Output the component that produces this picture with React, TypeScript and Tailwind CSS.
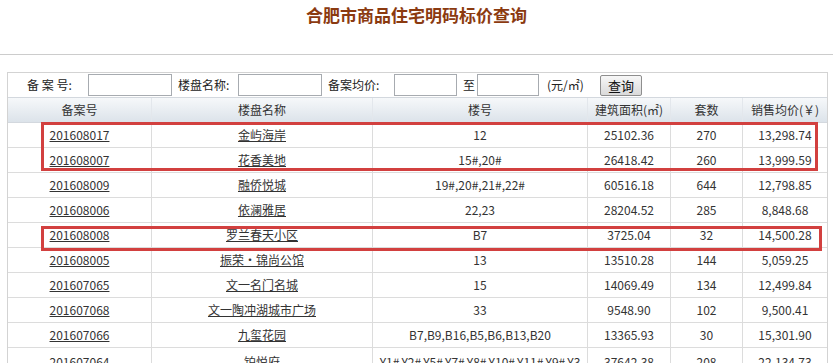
type Row = {
  no: string
  name: string
  building: string
  area: string
  units: string
  price: string
}

const rows: Row[] = [
  { no: '201608017', name: '金屿海岸', building: '12', area: '25102.36', units: '270', price: '13,298.74' },
  { no: '201608007', name: '花香美地', building: '15#,20#', area: '26418.42', units: '260', price: '13,999.59' },
  { no: '201608009', name: '融侨悦城', building: '19#,20#,21#,22#', area: '60516.18', units: '644', price: '12,798.85' },
  { no: '201608006', name: '依澜雅居', building: '22,23', area: '28204.52', units: '285', price: '8,848.68' },
  { no: '201608008', name: '罗兰春天小区', building: 'B7', area: '3725.04', units: '32', price: '14,500.28' },
  { no: '201608005', name: '振荣·锦尚公馆', building: '13', area: '13510.28', units: '144', price: '5,059.25' },
  { no: '201607065', name: '文一名门名城', building: '15', area: '14069.49', units: '134', price: '12,499.84' },
  { no: '201607068', name: '文一陶冲湖城市广场', building: '33', area: '9548.90', units: '102', price: '9,500.41' },
  { no: '201607066', name: '九玺花园', building: 'B7,B9,B16,B5,B6,B13,B20', area: '13365.93', units: '30', price: '15,301.90' },
  {
    no: '201607064',
    name: '铂悦府',
    building: 'Y1#,Y2#,Y5#,Y7#,Y8#,Y10#,Y11#,Y9#,Y3#,Y4#',
    area: '37642.38',
    units: '208',
    price: '22,134.73',
  },
]

const cols = ['w-[144px]', 'w-[221px]', 'w-[215px]', 'w-[83px]', 'w-[72px]', 'w-[84px]']
const headers = ['备案号', '楼盘名称', '楼号', '建筑面积(㎡)', '套数', '销售均价(￥)']

function FilterBar() {
  const input = 'h-[22px] border border-[#a7abb0] bg-white'
  return (
    <div className="flex h-[24px] items-center pl-[19px] text-[12px] text-[#222]">
      <span className="w-[61px] whitespace-pre">备 案 号:</span>
      <input className={`${input} w-[84px]`} />
      <span className="ml-[6px] w-[60px]">楼盘名称:</span>
      <input className={`${input} w-[84px]`} />
      <span className="ml-[6px] w-[66px]">备案均价:</span>
      <input className={`${input} w-[63px]`} />
      <span className="ml-[6px] w-[14px]">至</span>
      <input className={`${input} w-[62px]`} />
      <span className="ml-[8px] w-[53px]">(元/㎡)</span>
      <button className="h-[21px] w-[42px] rounded-[2px] border border-[#8e8e8e] bg-gradient-to-b from-[#f7f7f7] to-[#dadada] text-[13px] leading-none text-[#111]">
        查询
      </button>
    </div>
  )
}

function HouseTable() {
  return (
    <div className="text-[12px] text-[#333]">
      <div className="flex h-[26px] border-y border-[#d3d8de] bg-gradient-to-b from-[#f6f8fa] to-[#dce3ea]">
        {headers.map((h, i) => (
          <div
            key={h}
            className={`${cols[i]} flex items-center justify-center ${i < 5 ? 'border-r border-[#e3e7ec]' : ''}`}
          >
            {h}
          </div>
        ))}
      </div>

      {rows.map((r) => {
        const cells = [r.no, r.name, r.building, r.area, r.units, r.price]
        const tall = r.building.length > 30
        return (
          <div key={r.no} className="flex min-h-[25px] border-b border-[#dcdcdc]">
            {cells.map((c, i) => (
              <div
                key={i}
                className={`${cols[i]} flex justify-center px-[6px] text-center leading-[16px] ${
                  i < 5 ? 'border-r border-[#dcdcdc]' : ''
                } ${tall ? 'items-start break-all pb-[6px] pt-[6px]' : 'items-center'}`}
              >
                {i < 2 ? <a className="cursor-pointer text-[#333] underline">{c}</a> : c}
              </div>
            ))}
          </div>
        )
      })}
    </div>
  )
}

export default function App() {
  return (
    <div className="relative h-[363px] w-[833px] overflow-hidden bg-white font-['Noto_Sans_CJK_SC','Noto_Sans',sans-serif]">
      <h1 className="h-[54px] pt-[5px] text-center text-[17px] font-bold leading-[20px] text-[#8b3a10]">
        合肥市商品住宅明码标价查询
      </h1>
      <div className="border-t border-[#cccccc]" />

      <div className="ml-[7px] mt-[17px] w-[821px] border-x border-t border-[#d3d3d3]">
        <FilterBar />
        <HouseTable />
      </div>

      {/* red annotation boxes */}
      <div className="absolute left-[41px] top-[122px] h-[49px] w-[777px] border-[3px] border-[#d2403f]" />
      <div className="absolute left-[41px] top-[226px] h-[25px] w-[781px] border-[3px] border-[#d2403f]" />
    </div>
  )
}
